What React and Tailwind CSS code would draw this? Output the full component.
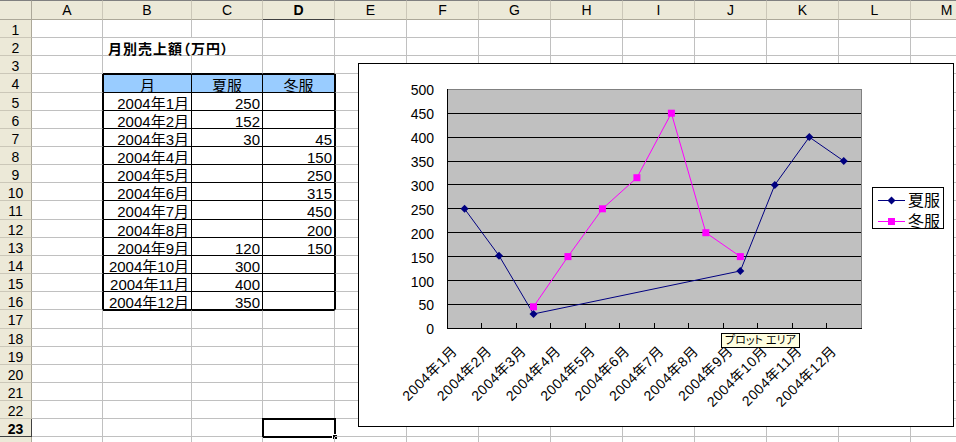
import React from "react";

const letters = ["", "A", "B", "C", "D", "E", "F", "G", "H", "I", "J", "K", "L", "M"];

const data = [
  ["2004年1月", 250, ""],
  ["2004年2月", 152, ""],
  ["2004年3月", 30, 45],
  ["2004年4月", "", 150],
  ["2004年5月", "", 250],
  ["2004年6月", "", 315],
  ["2004年7月", "", 450],
  ["2004年8月", "", 200],
  ["2004年9月", 120, 150],
  ["2004年10月", 300, ""],
  ["2004年11月", 400, ""],
  ["2004年12月", 350, ""],
];

function cellClass(r, c) {
  const inT = r >= 4 && r <= 16 && c >= 2 && c <= 4;
  const cls = ["relative border-r border-b whitespace-nowrap"];

  // right edge colour
  if (c === 0) cls.push(r === 23 ? "border-r-[#404040]" : "border-r-[#aca899]");
  else if (inT || (c === 1 && r >= 4 && r <= 16)) cls.push("border-r-black");
  else if (r === 2 && c === 2) cls.push("border-r-transparent");
  else if (r === 0) cls.push("border-r-[#cbc7b8]");
  else cls.push("border-r-[#c0c0c0]");

  // bottom edge colour
  if (r === 0) cls.push(c === 4 ? "border-b-[#404040]" : "border-b-[#aca899]");
  else if (c === 0) cls.push(r === 23 ? "border-b-[#404040]" : "border-b-[#cbc7b8]");
  else if (inT || (r === 3 && c >= 2 && c <= 4)) cls.push("border-b-black");
  else cls.push("border-b-[#c0c0c0]");

  // thick table outline
  if (inT && c === 2) cls.push("border-l border-l-black");
  if (inT && r === 4) cls.push("border-t border-t-black");
  if (c === 5 && r >= 4 && r <= 16) cls.push("border-l border-l-black");
  if (r === 17 && c >= 2 && c <= 4) cls.push("border-t border-t-black");

  if (r === 0) cls.push("border-t border-t-[#808080] bg-[#ece9d8] text-center text-[14px] leading-[15px] pt-[2px]");
  else if (c === 0) cls.push("bg-[#ece9d8] text-center text-[14px] leading-[17px] pt-[2px]");
  else cls.push("text-[15px] leading-[17px] pt-[2px]");

  if (r === 4 && inT) cls.push("bg-[#99ccff] text-center");
  if (r >= 5 && r <= 16 && inT) cls.push("text-right pr-[2px]");
  if (r === 23 && c === 4) cls.push("outline-2 outline-black -outline-offset-1");
  if ((r === 0 && c === 4) || (c === 0 && r === 23)) cls.push("font-bold");
  return cls.join(" ");
}

function cellText(r, c) {
  if (r === 0) return letters[c];
  if (c === 0) return r < 24 ? r : null;
  if (r === 2 && c === 2)
    return (
      <span className="pl-[5px] font-bold text-[14px] tracking-[1px] [font-feature-settings:'palt']">
        月別売上額（万円）
      </span>
    );
  if (r === 4 && c === 2) return "月";
  if (r === 4 && c === 3) return "夏服";
  if (r === 4 && c === 4) return "冬服";
  if (r >= 5 && r <= 16 && c >= 2 && c <= 4) return data[r - 5][c - 2];
  return null;
}

function Chart() {
  const x0 = 447.3;
  const cw = 413.7 / 12;
  const y0 = 328.3;
  const k = 239 / 500;
  const cx = (i) => x0 + (i + 0.5) * cw;
  const cy = (v) => y0 - v * k;
  const px = (v) => Math.floor(v) + 0.5;

  const summer = [[0, 250], [1, 152], [2, 30], [8, 120], [9, 300], [10, 400], [11, 350]];
  const winter = [[2, 45], [3, 150], [4, 250], [5, 315], [6, 450], [7, 200], [8, 150]];
  const pts = (s) => s.map(([i, v]) => `${cx(i)},${cy(v)}`).join(" ");
  const diamond = (x, y) => `${x},${y - 4} ${x + 4},${y} ${x},${y + 4} ${x - 4},${y}`;

  return (
    <svg width="594" height="362" viewBox="359 64 594 362" className="block">
      <rect x="447" y="89" width="414" height="240" fill="#c0c0c0" />
      <path d="M447 89.5H861.5V328" stroke="#808080" fill="none" shapeRendering="crispEdges" />
      {[50, 100, 150, 200, 250, 300, 350, 400, 450].map((v) => (
        <line key={v} x1="447" x2="861" y1={px(cy(v))} y2={px(cy(v))} stroke="#000" shapeRendering="crispEdges" />
      ))}
      <line x1="447.5" x2="447.5" y1="89" y2="329" stroke="#000" shapeRendering="crispEdges" />
      <line x1="447" x2="862" y1="328.5" y2="328.5" stroke="#000" shapeRendering="crispEdges" />
      {Array.from({ length: 11 }, (_, i) => (
        <line key={i} x1={px(x0 + (i + 1) * cw)} x2={px(x0 + (i + 1) * cw)} y1="323" y2="328" stroke="#000" shapeRendering="crispEdges" />
      ))}
      {[0, 50, 100, 150, 200, 250, 300, 350, 400, 450, 500].map((v) => (
        <text key={v} x="434" y={cy(v) + 6} textAnchor="end" fontSize="14">{v}</text>
      ))}
      {data.map((d, i) => {
        const ax = cx(i) - 6.5;
        return (
          <text
            key={i}
            x={ax}
            y="352"
            textAnchor="end"
            fontSize="14"
            letterSpacing="0.5"
            transform={`rotate(-45 ${ax} 352)`}
          >
            {d[0]}
          </text>
        );
      })}

      <polyline points={pts(summer)} fill="none" stroke="#000080" strokeWidth="1" />
      {summer.map(([i, v]) => (
        <polygon key={i} points={diamond(cx(i), cy(v))} fill="#000080" />
      ))}
      <polyline points={pts(winter)} fill="none" stroke="#ff00ff" strokeWidth="1" />
      {winter.map(([i, v]) => (
        <rect key={i} x={cx(i) - 3.5} y={cy(v) - 3.5} width="7" height="7" fill="#ff00ff" />
      ))}

      {/* legend */}
      <rect x="872.5" y="187.5" width="71" height="41" fill="#fff" stroke="#000" shapeRendering="crispEdges" />
      <line x1="878" x2="905" y1="200.5" y2="200.5" stroke="#000080" />
      <polygon points={diamond(891.5, 200.5)} fill="#000080" />
      <text x="908" y="206" fontSize="16">夏服</text>
      <line x1="878" x2="905" y1="221.5" y2="221.5" stroke="#ff00ff" />
      <rect x="888" y="218" width="7" height="7" fill="#ff00ff" />
      <text x="908" y="227" fontSize="16">冬服</text>
    </svg>
  );
}

export default function App() {
  const rows = Array.from({ length: 25 }, (_, r) => r);
  const cols = Array.from({ length: 14 }, (_, c) => c);

  return (
    <div className="relative w-[956px] h-[442px] overflow-hidden bg-white text-black font-['Liberation_Sans','Noto_Sans_CJK_JP',sans-serif]">
      <div className="grid w-max grid-cols-[32px_71px_89px_71px_72px_72px_72px_72px_72px_72px_72px_72px_72px_72px] grid-rows-[20px_18px_18px_18px_19px_18px_18px_18px_18px_18px_18px_19px_18px_18px_18px_18px_18px_19px_18px_18px_18px_18px_18px_18px_18px]">
        {rows.map((r) =>
          cols.map((c) => (
            <div key={`${r}-${c}`} className={cellClass(r, c)}>
              {cellText(r, c)}
              {r === 23 && c === 4 && (
                <span className="absolute right-[-4px] bottom-[-4px] w-[6px] h-[6px] bg-black border border-white" />
              )}
            </div>
          ))
        )}
      </div>

      {/* embedded chart object */}
      <div className="absolute left-[358px] top-[63px] w-[596px] h-[364px] border border-black bg-white">
        <Chart />
      </div>

      {/* hover tip */}
      <div className="absolute left-[721px] top-[333px] h-[15px] px-[3px] border border-black bg-[#ffffe1] text-[11px] leading-[13px] whitespace-nowrap [font-feature-settings:'palt']">
        プロット エリア
      </div>
    </div>
  );
}
